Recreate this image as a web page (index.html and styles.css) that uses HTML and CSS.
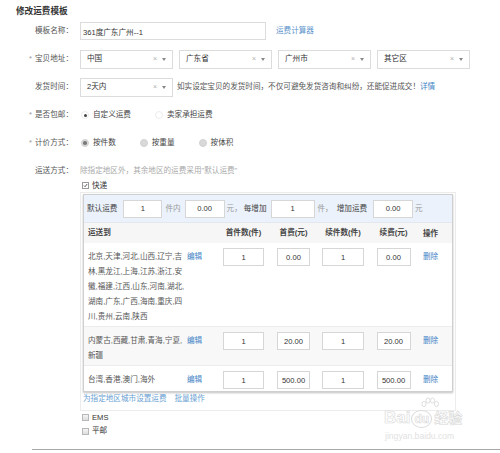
FILE: index.html
```html
<!DOCTYPE html>
<html lang="zh-CN">
<head>
<meta charset="utf-8">
<title>修改运费模板</title>
<link rel="stylesheet" href="styles.css">
</head>
<body>
<div class="page">
  <h1 class="title">修改运费模板</h1>

  <div class="form-row">
    <div class="label">模板名称：</div>
    <div class="field">
      <input class="text-input wide" type="text" value="361度广东广州--1" readonly>
      <a class="link calc">运费计算器</a>
    </div>
  </div>

  <div class="form-row">
    <div class="label"><span class="star">*</span>宝贝地址：</div>
    <div class="field">
      <div class="select"><span class="sel-text">中国</span><span class="sel-clear">×</span><span class="caret"></span></div>
      <div class="select"><span class="sel-text">广东省</span><span class="sel-clear">×</span><span class="caret"></span></div>
      <div class="select"><span class="sel-text">广州市</span><span class="sel-clear">×</span><span class="caret"></span></div>
      <div class="select"><span class="sel-text">其它区</span><span class="sel-clear">×</span><span class="caret"></span></div>
    </div>
  </div>

  <div class="form-row">
    <div class="label">发货时间：</div>
    <div class="field">
      <div class="select"><span class="sel-text">2天内</span><span class="sel-clear">×</span><span class="caret"></span></div>
      <span class="hint">如实设定宝贝的发货时间，不仅可避免发货咨询和纠纷，还能促进成交！<a class="link">详情</a></span>
    </div>
  </div>

  <div class="form-row">
    <div class="label"><span class="star">*</span>是否包邮：</div>
    <div class="field">
      <span class="opt"><span class="radio radio-on"></span>自定义运费</span>
      <span class="opt"><span class="radio"></span>卖家承担运费</span>
    </div>
  </div>

  <div class="form-row">
    <div class="label"><span class="star">*</span>计价方式：</div>
    <div class="field">
      <span class="opt"><span class="radio radio-grey radio-dot"></span>按件数</span>
      <span class="opt"><span class="radio radio-grey"></span>按重量</span>
      <span class="opt"><span class="radio radio-grey"></span>按体积</span>
    </div>
  </div>

  <div class="ship-row">
    <div class="label ship-label">运送方式：</div>
    <div class="ship-content">
      <div class="ship-help">除指定地区外，其余地区的运费采用"默认运费"</div>
      <div class="check-line"><span class="checkbox checked"><svg viewBox="0 0 7 7" width="7" height="7"><path d="M1.3 3.6 L2.9 5.2 L5.8 1.4" fill="none" stroke="#333" stroke-width="1.1"/></svg></span>快递</div>

      <div class="outer-box">
        <div class="inner-box">
          <div class="default-bar">
            <span class="bar-strong">默认运费</span>
            <input class="cell-input w39 m6" type="text" value="1" readonly>
            <span class="bar-muted m3">件内</span>
            <input class="cell-input w40 m4" type="text" value="0.00" readonly>
            <span class="bar-muted m2">元，</span>
            <span class="bar-strong m2">每增加</span>
            <input class="cell-input w44 m4" type="text" value="1" readonly>
            <span class="bar-muted m3">件，</span>
            <span class="bar-strong m4">增加运费</span>
            <input class="cell-input w40 m6" type="text" value="0.00" readonly>
            <span class="bar-muted m2">元</span>
          </div>

          <div class="t-row t-head">
            <div class="c-area">运送到</div>
            <div class="c-edit"></div>
            <div class="c-num">首件数(件)</div>
            <div class="c-num">首费(元)</div>
            <div class="c-num">续件数(件)</div>
            <div class="c-num">续费(元)</div>
            <div class="c-op">操作</div>
          </div>

          <div class="t-row t-body">
            <div class="c-area area-text">北京,天津,河北,山西,辽宁,吉<br>林,黑龙江,上海,江苏,浙江,安<br>徽,福建,江西,山东,河南,湖北,<br>湖南,广东,广西,海南,重庆,四<br>川,贵州,云南,陕西</div>
            <div class="c-edit"><a class="link">编辑</a></div>
            <div class="c-num"><input class="cell-input w41" type="text" value="1" readonly></div>
            <div class="c-num"><input class="cell-input w33" type="text" value="0.00" readonly></div>
            <div class="c-num"><input class="cell-input w42" type="text" value="1" readonly></div>
            <div class="c-num"><input class="cell-input w34" type="text" value="0.00" readonly></div>
            <div class="c-op"><a class="link">删除</a></div>
          </div>

          <div class="t-row t-body t-alt">
            <div class="c-area area-text">内蒙古,西藏,甘肃,青海,宁夏,<br>新疆</div>
            <div class="c-edit"><a class="link">编辑</a></div>
            <div class="c-num"><input class="cell-input w41" type="text" value="1" readonly></div>
            <div class="c-num"><input class="cell-input w33" type="text" value="20.00" readonly></div>
            <div class="c-num"><input class="cell-input w42" type="text" value="1" readonly></div>
            <div class="c-num"><input class="cell-input w34" type="text" value="20.00" readonly></div>
            <div class="c-op"><a class="link">删除</a></div>
          </div>

          <div class="t-row t-body t-last">
            <div class="c-area area-text">台湾,香港,澳门,海外</div>
            <div class="c-edit"><a class="link">编辑</a></div>
            <div class="c-num"><input class="cell-input w41" type="text" value="1" readonly></div>
            <div class="c-num"><input class="cell-input w33" type="text" value="500.00" readonly></div>
            <div class="c-num"><input class="cell-input w42" type="text" value="1" readonly></div>
            <div class="c-num"><input class="cell-input w34" type="text" value="500.00" readonly></div>
            <div class="c-op"><a class="link">删除</a></div>
          </div>
        </div>
        <div class="box-links"><a class="link light">为指定地区城市设置运费</a><a class="link light batch">批量操作</a></div>
      </div>

      <div class="check-line small"><span class="checkbox"></span>EMS</div>
      <div class="check-line small"><span class="checkbox"></span>平邮</div>
    </div>
  </div>

  <div class="footer-line"></div>

  <div class="watermark">
    <svg class="paw" viewBox="0 0 20 16" width="20" height="16">
      <g fill="none" stroke="#d6d6d6" stroke-width="0.8">
        <ellipse cx="4" cy="7" rx="2" ry="2.6"/>
        <ellipse cx="8" cy="3.5" rx="2" ry="2.6"/>
        <ellipse cx="12.5" cy="3.5" rx="2" ry="2.6"/>
        <ellipse cx="16.5" cy="7" rx="2" ry="2.6"/>
      </g>
    </svg>
    <div class="wm-main"><span>Bai</span><span class="wm-du">du</span><span class="wm-cn">经验</span></div>
    <div class="wm-url">jingyan.baidu.com</div>
  </div>
</div>
</body>
</html>
```

FILE: styles.css
```css
* {
  box-sizing: border-box;
}

html,
body {
  margin: 0;
  padding: 0;
  background: #ffffff;
}

body {
  width: 500px;
  height: 453px;
  overflow: hidden;
  font-family: "Liberation Sans", "Noto Sans CJK SC", sans-serif;
  font-size: 7.6px;
  line-height: 12px;
  color: #555555;
}

.page {
  position: relative;
  width: 500px;
  height: 453px;
}

.title {
  margin: 0;
  padding: 5px 0 0 16px;
  height: 17px;
  font-size: 8.6px;
  line-height: 12px;
  font-weight: bold;
  color: #333333;
}

.form-row {
  display: flex;
  align-items: center;
  height: 28px;
}

.label {
  flex: none;
  width: 73px;
  margin-right: 7px;
  text-align: right;
  color: #555555;
  white-space: nowrap;
}

.star {
  color: #999999;
  margin-right: 3px;
}

.field {
  display: flex;
  align-items: center;
}

.text-input {
  height: 18px;
  border: 1px solid #dcdcdc;
  padding: 0 2px;
  font: inherit;
  color: #333333;
  background: #ffffff;
  outline: none;
}

.wide {
  width: 186px;
}

.link {
  color: #3f83c6;
  text-decoration: none;
  cursor: pointer;
}

.link.light {
  color: #6a9fd2;
}

.calc {
  margin-left: 10px;
  color: #5b93cb;
}

.select {
  flex: none;
  width: 93px;
  height: 19px;
  border: 1px solid #dcdcdc;
  display: flex;
  align-items: center;
  padding: 0 6px 0 6px;
  color: #333333;
  background: #ffffff;
}

.select + .select {
  margin-left: 6px;
}

.sel-text {
  flex: 1;
}

.sel-clear {
  color: #b0b0b0;
  font-size: 7px;
  margin-right: 5px;
}

.caret {
  width: 0;
  height: 0;
  border-left: 2.5px solid transparent;
  border-right: 2.5px solid transparent;
  border-top: 3px solid #888888;
}

.hint {
  margin-left: 4px;
  color: #555555;
  white-space: nowrap;
}

.opt {
  display: flex;
  align-items: center;
  margin-right: 23px;
  color: #444444;
}

.radio {
  flex: none;
  width: 8px;
  height: 8px;
  margin-left: 1px;
  margin-right: 4px;
  border-radius: 50%;
  border: 1px solid #ececec;
  background: #ffffff;
  display: flex;
  align-items: center;
  justify-content: center;
}

.radio-on::after,
.radio-dot::after {
  content: "";
  width: 3px;
  height: 3px;
  border-radius: 50%;
  background: #444444;
}

.radio-grey {
  border-color: #d2d2d2;
  background: #d9d9d9;
}

.radio-dot::after {
  width: 3.5px;
  height: 3.5px;
  background: #7a7a7a;
}

.ship-row {
  display: flex;
  align-items: flex-start;
}

.ship-label {
  margin-top: 6px;
  line-height: 16px;
}

.ship-content {
  width: 376px;
}

.ship-help {
  margin-top: 6px;
  line-height: 16px;
  color: #aaaaaa;
}

.check-line {
  display: flex;
  align-items: center;
  height: 13px;
  padding-left: 2px;
  color: #333333;
}

.check-line.small {
  height: 13.5px;
}

.checkbox {
  flex: none;
  width: 7px;
  height: 7px;
  margin-right: 3px;
  border: 1px solid #b8b8b8;
  background: linear-gradient(#f4f4f4, #dedede);
  display: flex;
  align-items: center;
  justify-content: center;
}

.checkbox.checked {
  border: none;
  background: none;
}

.checkbox.checked svg {
  border: 1px solid #9a9a9a;
  background: #ffffff;
}

.outer-box {
  width: 376px;
  border: 1px solid #ececec;
  padding: 1px 3px 4px 2px;
}

.inner-box {
  width: 370px;
  border: 1px solid #cfcfcf;
  box-shadow: 0 1px 2px rgba(0, 0, 0, 0.25);
  background: #ffffff;
}

.default-bar {
  display: flex;
  align-items: center;
  height: 28px;
  padding-left: 3px;
  background: #ebf2fb;
  border-bottom: 1px solid #e3e8ee;
}

.bar-strong {
  color: #444444;
}

.bar-muted {
  color: #9a9a9a;
}

.m2 { margin-left: 2px; }
.m3 { margin-left: 3px; }
.m4 { margin-left: 4px; }
.m6 { margin-left: 6px; }

.cell-input {
  height: 18px;
  border: 1px solid #d6d6d6;
  padding: 0;
  font: inherit;
  color: #333333;
  text-align: center;
  background: #ffffff;
  outline: none;
}

.w33 { width: 33px; }
.w34 { width: 34px; }
.w39 { width: 39px; }
.w40 { width: 40px; }
.w41 { width: 41px; }
.w42 { width: 42px; }
.w44 { width: 44px; }

.t-row {
  display: grid;
  grid-template-columns: 101px 34px 49px 51px 48px 53px 1fr;
  align-items: start;
}

.t-head {
  height: 20px;
  align-items: center;
  background: #f6f6f6;
  font-weight: bold;
  color: #444444;
}

.t-body {
  padding: 5px 0 2px;
  border-top: 1px solid #ececec;
}

.t-head + .t-body {
  border-top: none;
}

.t-alt {
  background: #f8f8f8;
}

.c-area {
  padding-left: 4px;
}

.area-text {
  padding-top: 1px;
  line-height: 15px;
  color: #555555;
  white-space: nowrap;
}

.c-edit {
  padding-left: 2px;
  padding-top: 1px;
  line-height: 15px;
}

.c-num {
  display: flex;
  justify-content: center;
  white-space: nowrap;
}

.c-op {
  padding-left: 3px;
  padding-top: 1px;
  line-height: 15px;
}

.t-head .c-edit,
.t-head .c-op {
  padding-top: 0;
}

.box-links {
  height: 14px;
  line-height: 14px;
}

.batch {
  margin-left: 8px;
}

.footer-line {
  margin: 11px 0 0 32px;
  border-top: 1px solid #a8a8a8;
}

.watermark {
  position: absolute;
  left: 384px;
  top: 397px;
  width: 92px;
  pointer-events: none;
}

.paw {
  position: absolute;
  left: 36px;
  top: 0;
}

.wm-main {
  position: absolute;
  left: 0;
  top: 11px;
  font-size: 17px;
  line-height: 20px;
  font-weight: bold;
  color: rgba(255, 255, 255, 0.7);
  -webkit-text-stroke: 0.6px #d8d8d8;
  white-space: nowrap;
}

.wm-du {
  display: inline-block;
  margin-left: 1px;
  font-size: 12px;
  line-height: 16px;
  padding: 0 2px;
  border: 1px solid #dadada;
  border-radius: 50%;
}

.wm-cn {
  margin-left: 2px;
  font-size: 14px;
}

.wm-url {
  position: absolute;
  left: 1px;
  top: 34px;
  font-size: 8.6px;
  line-height: 10px;
  color: #e2e2e2;
  white-space: nowrap;
}
```
